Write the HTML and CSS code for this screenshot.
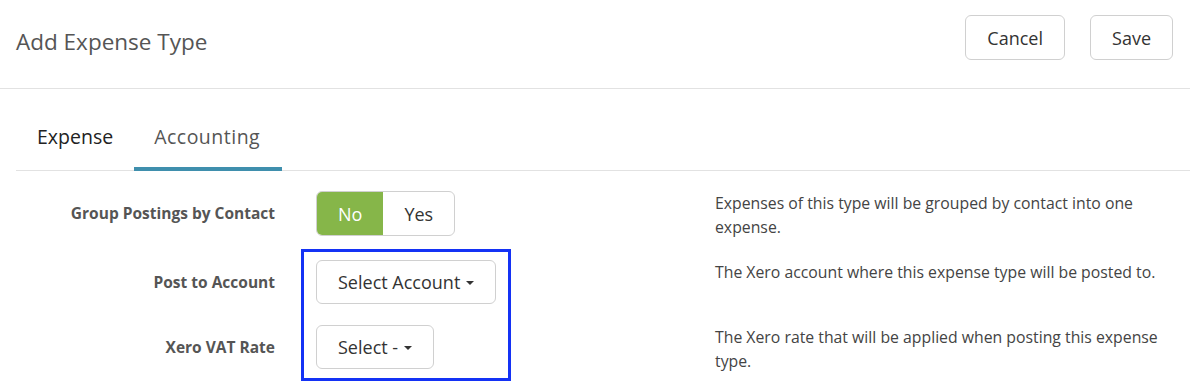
FILE: index.html
```html
<!DOCTYPE html>
<html lang="en">
<head>
  <meta charset="UTF-8">
  <title>Add Expense Type</title>
  <link rel="stylesheet" href="styles.css">
</head>
<body>
  <header class="page__header">
    <h1 class="page__title">Add Expense Type</h1>
    <div class="page__actions">
      <button class="btn">Cancel</button>
      <button class="btn">Save</button>
    </div>
  </header>
  <main class="page__body">
    <ul class="tabs">
      <li class="tab">Expense</li>
      <li class="tab tab--active">Accounting</li>
    </ul>
    <div class="form">
      <div class="form__row">
        <label class="form__label">Group Postings by Contact</label>
        <div class="form__control">
          <div class="toggle">
            <span class="toggle__opt toggle__opt--on">No</span>
            <span class="toggle__opt">Yes</span>
          </div>
        </div>
        <p class="form__help">Expenses of this type will be grouped by contact into one expense.</p>
      </div>
      <div class="form__row">
        <label class="form__label">Post to Account</label>
        <div class="form__control">
          <button class="btn btn--select">Select Account <span class="caret"></span></button>
        </div>
        <p class="form__help">The Xero account where this expense type will be posted to.</p>
      </div>
      <div class="form__row">
        <label class="form__label">Xero VAT Rate</label>
        <div class="form__control">
          <button class="btn btn--select">Select - <span class="caret"></span></button>
        </div>
        <p class="form__help">The Xero rate that will be applied when posting this expense type.</p>
      </div>
      <div class="highlight"></div>
    </div>
  </main>
</body>
</html>
```

FILE: styles.css
```css
:root {
  --text: #555;
  --dark: #333;
  --line: #e2e2e2;
  --border: #d0d0d0;
  --green: #86b649;
  --teal: #3f8fad;
  --blue: #1432f5;
}
html {
  font-family: "Open Sans", "Noto Sans", sans-serif;
}
body {
  margin: 0;
  background: #fff;
  color: var(--text);
}
.page__header {
  display: flex;
  justify-content: space-between;
  align-items: center;
  height: 89px;
  padding: 0 17px 0 16px;
  border-bottom: 1px solid var(--line);
  box-sizing: border-box;
}
.page__title {
  margin: 0;
  font-size: 22.5px;
  font-weight: 400;
  color: var(--text);
  padding-bottom: 6px;
}
.page__actions {
  display: flex;
  gap: 25px;
  align-self: flex-start;
  margin-top: 15px;
}
.btn {
  font-family: inherit;
  font-size: 18px;
  color: var(--dark);
  background: #fff;
  border: 1px solid var(--border);
  border-radius: 6px;
  height: 45px;
  padding: 0 21px;
  cursor: pointer;
}
.page__body {
  padding: 0 0 0 16px;
}
.tabs {
  display: flex;
  list-style: none;
  margin: 0;
  padding: 0 0 0 1px;
  border-bottom: 1px solid var(--line);
}
.tab {
  font-size: 19.5px;
  color: #222;
  padding: 0 21px 0 20px;
  height: 82px;
  line-height: 96px;
  box-sizing: border-box;
  border-bottom: 4px solid transparent;
  margin-bottom: -1px;
}
.tab--active {
  color: var(--text);
  border-bottom-color: var(--teal);
  letter-spacing: 0.5px;
  padding-right: 22px;
}
.form {
  position: relative;
  padding-top: 20px;
}
.form__row {
  display: grid;
  grid-template-columns: 259px 358px 1fr;
  gap: 0 41px;
  align-items: start;
  margin-bottom: 21px;
}
.form__label {
  font-size: 15.5px;
  font-weight: 700;
  color: var(--text);
  text-align: right;
  line-height: 44px;
}
.form__control {
  display: flex;
}
.form__help {
  margin: 0;
  font-size: 15.8px;
  line-height: 24px;
  color: #444;
  max-width: 452px;
}
.toggle {
  display: flex;
  height: 45px;
  border: 1px solid var(--border);
  border-radius: 6px;
  overflow: hidden;
  box-sizing: border-box;
}
.toggle__opt {
  display: flex;
  align-items: center;
  padding: 0 21px;
  font-size: 18px;
  color: var(--dark);
}
.toggle__opt--on {
  background: var(--green);
  color: #fff;
}
.btn--select {
  height: 44px;
  padding: 0 21px;
  display: flex;
  align-items: center;
  gap: 6px;
}
.caret {
  display: inline-block;
  width: 0;
  height: 0;
  border-left: 4.5px solid transparent;
  border-right: 4.5px solid transparent;
  border-top: 4.5px solid var(--dark);
  margin-top: 2px;
}
.highlight {
  position: absolute;
  left: 285px;
  top: 78px;
  width: 204px;
  height: 126px;
  border: 3px solid var(--blue);
  pointer-events: none;
}
```
